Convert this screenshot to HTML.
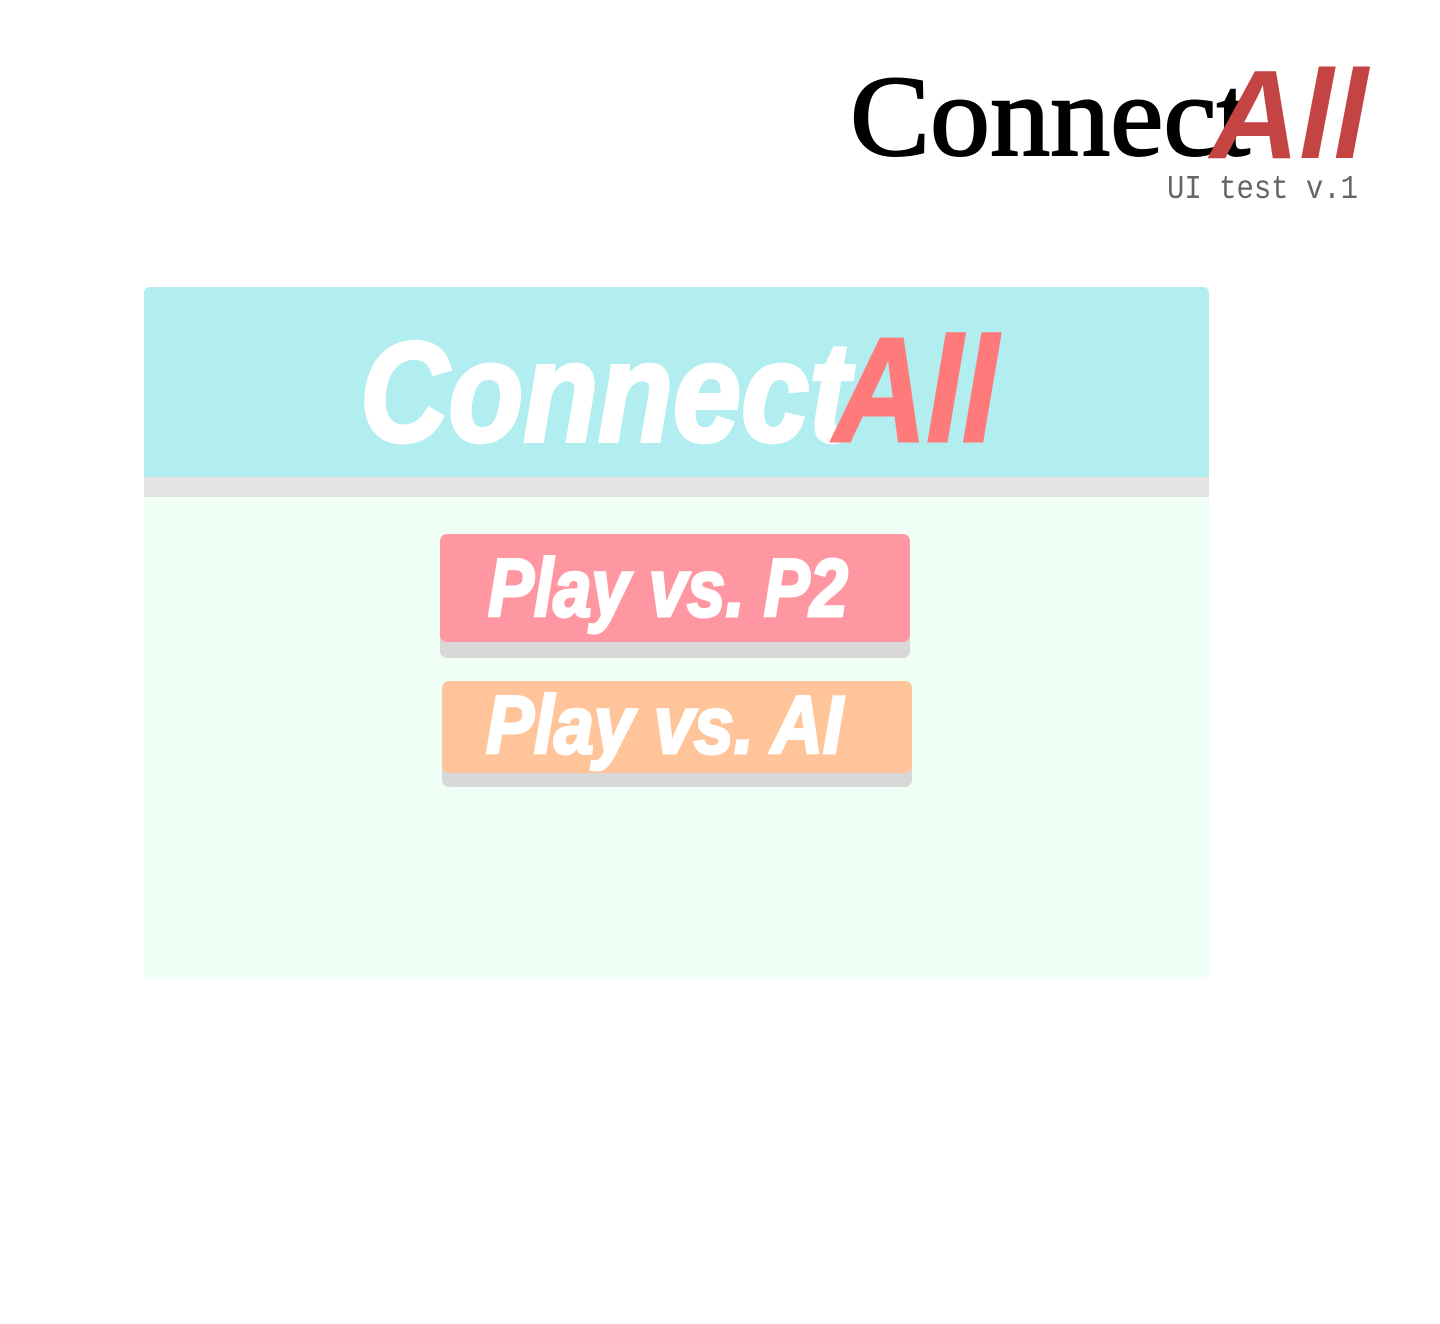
<!DOCTYPE html>
<html><head><meta charset="utf-8"><style>
html,body{margin:0;padding:0;background:#fff;width:1440px;height:1324px;overflow:hidden;position:relative;font-family:"Liberation Sans",sans-serif}
.abs{position:absolute}
svg{position:absolute;left:0;top:0;overflow:visible}
</style></head><body>
<div class="abs" style="left:144px;top:287px;width:1065px;height:692px;background:#effff6;border-radius:6px;overflow:hidden">
  <div class="abs" style="left:0;top:0;width:1065px;height:190px;background:#b2edef"></div>
  <div class="abs" style="left:0;top:190px;width:1065px;height:20px;background:#e3e3e3"></div>
</div>
<div class="abs" style="left:440px;top:550px;width:470px;height:108px;background:#d8d8d8;border-radius:7px"></div>
<div class="abs" style="left:440px;top:534px;width:470px;height:108px;background:#ff97a3;border-radius:7px"></div>
<div class="abs" style="left:442px;top:695px;width:470px;height:92px;background:#d8d8d8;border-radius:7px"></div>
<div class="abs" style="left:442px;top:681px;width:470px;height:92px;background:#ffc499;border-radius:7px"></div>
<svg width="1440" height="1324">
  <text x="850" y="155" font-family="Liberation Serif,serif" font-size="116" fill="#000" stroke="#000" stroke-width="2" textLength="400" lengthAdjust="spacingAndGlyphs">Connect</text>
  <text x="1210" y="158" font-family="Liberation Sans,sans-serif" font-weight="bold" font-style="italic" font-size="126" fill="#c44444" textLength="158" lengthAdjust="spacingAndGlyphs">All</text>
  <text x="1167" y="198" font-family="Liberation Mono,monospace" font-size="33" fill="#666" textLength="191" lengthAdjust="spacingAndGlyphs">UI test v.1</text>
  <text x="360" y="441" font-family="Liberation Sans,sans-serif" font-weight="bold" font-style="italic" font-size="142" fill="#fff" stroke="#fff" stroke-width="4" textLength="490" lengthAdjust="spacingAndGlyphs">Connect</text>
  <text x="834" y="441" font-family="Liberation Sans,sans-serif" font-weight="bold" font-style="italic" font-size="148" fill="#ff7a7a" stroke="#ff7a7a" stroke-width="3" textLength="164" lengthAdjust="spacingAndGlyphs">All</text>
  <text x="488" y="616" font-family="Liberation Sans,sans-serif" font-weight="bold" font-style="italic" font-size="82" fill="#fff" stroke="#fff" stroke-width="3" textLength="360" lengthAdjust="spacingAndGlyphs">Play vs. P2</text>
  <text x="486" y="753" font-family="Liberation Sans,sans-serif" font-weight="bold" font-style="italic" font-size="82" fill="#fff" stroke="#fff" stroke-width="3" textLength="357" lengthAdjust="spacingAndGlyphs">Play vs. AI</text>
</svg>
</body></html>
